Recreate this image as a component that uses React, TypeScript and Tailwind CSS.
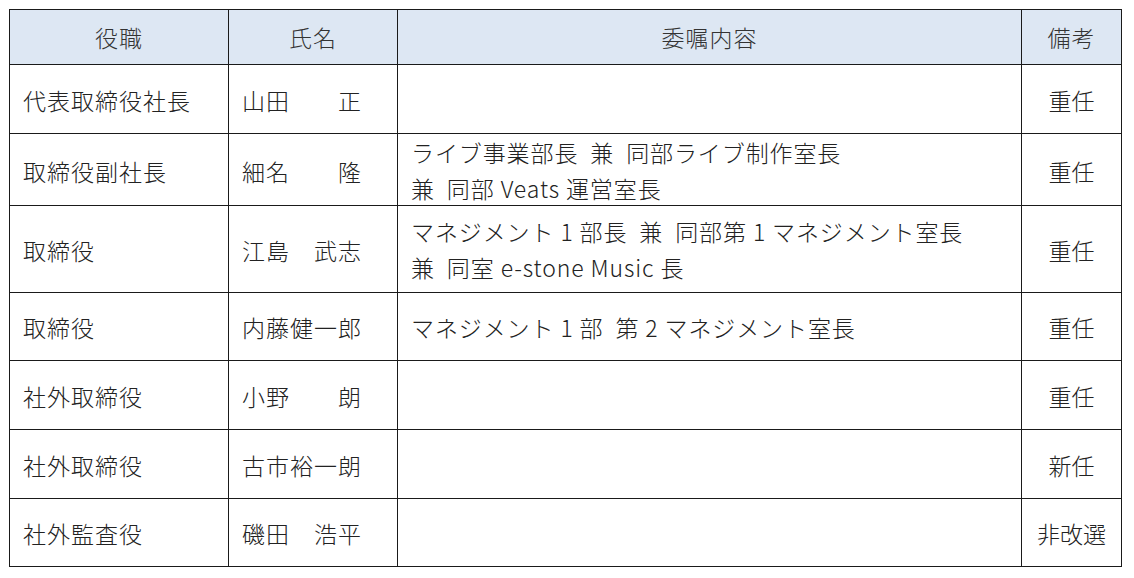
const rows = [
  { role: "代表取締役社長", name: "山田　　正", duty: [], note: "重任", h: "h-[69px]" },
  {
    role: "取締役副社長",
    name: "細名　　隆",
    duty: ["ライブ事業部長\u00a0\u00a0兼\u00a0\u00a0同部ライブ制作室長", "兼\u00a0\u00a0同部 Veats 運営室長"],
    note: "重任",
    h: "h-[72px]",
  },
  {
    role: "取締役",
    name: "江島　武志",
    duty: ["マネジメント 1 部長\u00a0\u00a0兼\u00a0\u00a0同部第 1 マネジメント室長", "兼\u00a0\u00a0同室 e-stone Music 長"],
    note: "重任",
    h: "h-[87px]",
  },
  { role: "取締役", name: "内藤健一郎", duty: ["マネジメント 1 部\u00a0\u00a0第 2 マネジメント室長"], note: "重任", h: "h-[68px]" },
  { role: "社外取締役", name: "小野　　朗", duty: [], note: "重任", h: "h-[69px]" },
  { role: "社外取締役", name: "古市裕一朗", duty: [], note: "新任", h: "h-[69px]" },
  { role: "社外監査役", name: "磯田　浩平", duty: [], note: "非改選", h: "h-[68px]" },
]

const cols = "grid grid-cols-[219px_169px_624px_100px]"
const cell = "border-r border-[#1a1a1a] flex items-center"

export default function App() {
  return (
    <div
      className="w-[1134px] h-[578px] bg-white pl-[9px] pt-[9px] text-[#222] overflow-hidden"
      style={{ fontFamily: '"Noto Sans CJK JP", "Noto Sans", sans-serif' }}
    >
      <div className="w-[1113px] border-l border-t border-[#1a1a1a] text-[23px] tracking-[1px] leading-none font-light">
        {/* 見出し */}
        <div className={`${cols} h-[55px] bg-[#dde7f3] text-[#333] border-b border-[#1a1a1a]`}>
          <div className={`${cell} justify-center`}>役職</div>
          <div className={`${cell} justify-center`}>氏名</div>
          <div className={`${cell} justify-center`}>委嘱内容</div>
          <div className={`${cell} justify-center`}>備考</div>
        </div>

        {rows.map((r, i) => (
          <div key={i} className={`${cols} ${r.h} border-b border-[#1a1a1a]`}>
            <div className={`${cell} pl-[13px] pt-[2px]`}>{r.role}</div>
            <div className={`${cell} pl-[13px] pt-[2px] whitespace-nowrap`}>{r.name}</div>
            <div className={`${cell} flex-col !items-start justify-center pl-[13px] tracking-[0.9px]`}>
              {r.duty.map((d, j) => (
                <div key={j} className="leading-[36px] whitespace-nowrap">
                  {d}
                </div>
              ))}
            </div>
            <div className={`${cell} justify-center pt-[2px] tracking-[0px]`}>{r.note}</div>
          </div>
        ))}
      </div>
    </div>
  )
}
